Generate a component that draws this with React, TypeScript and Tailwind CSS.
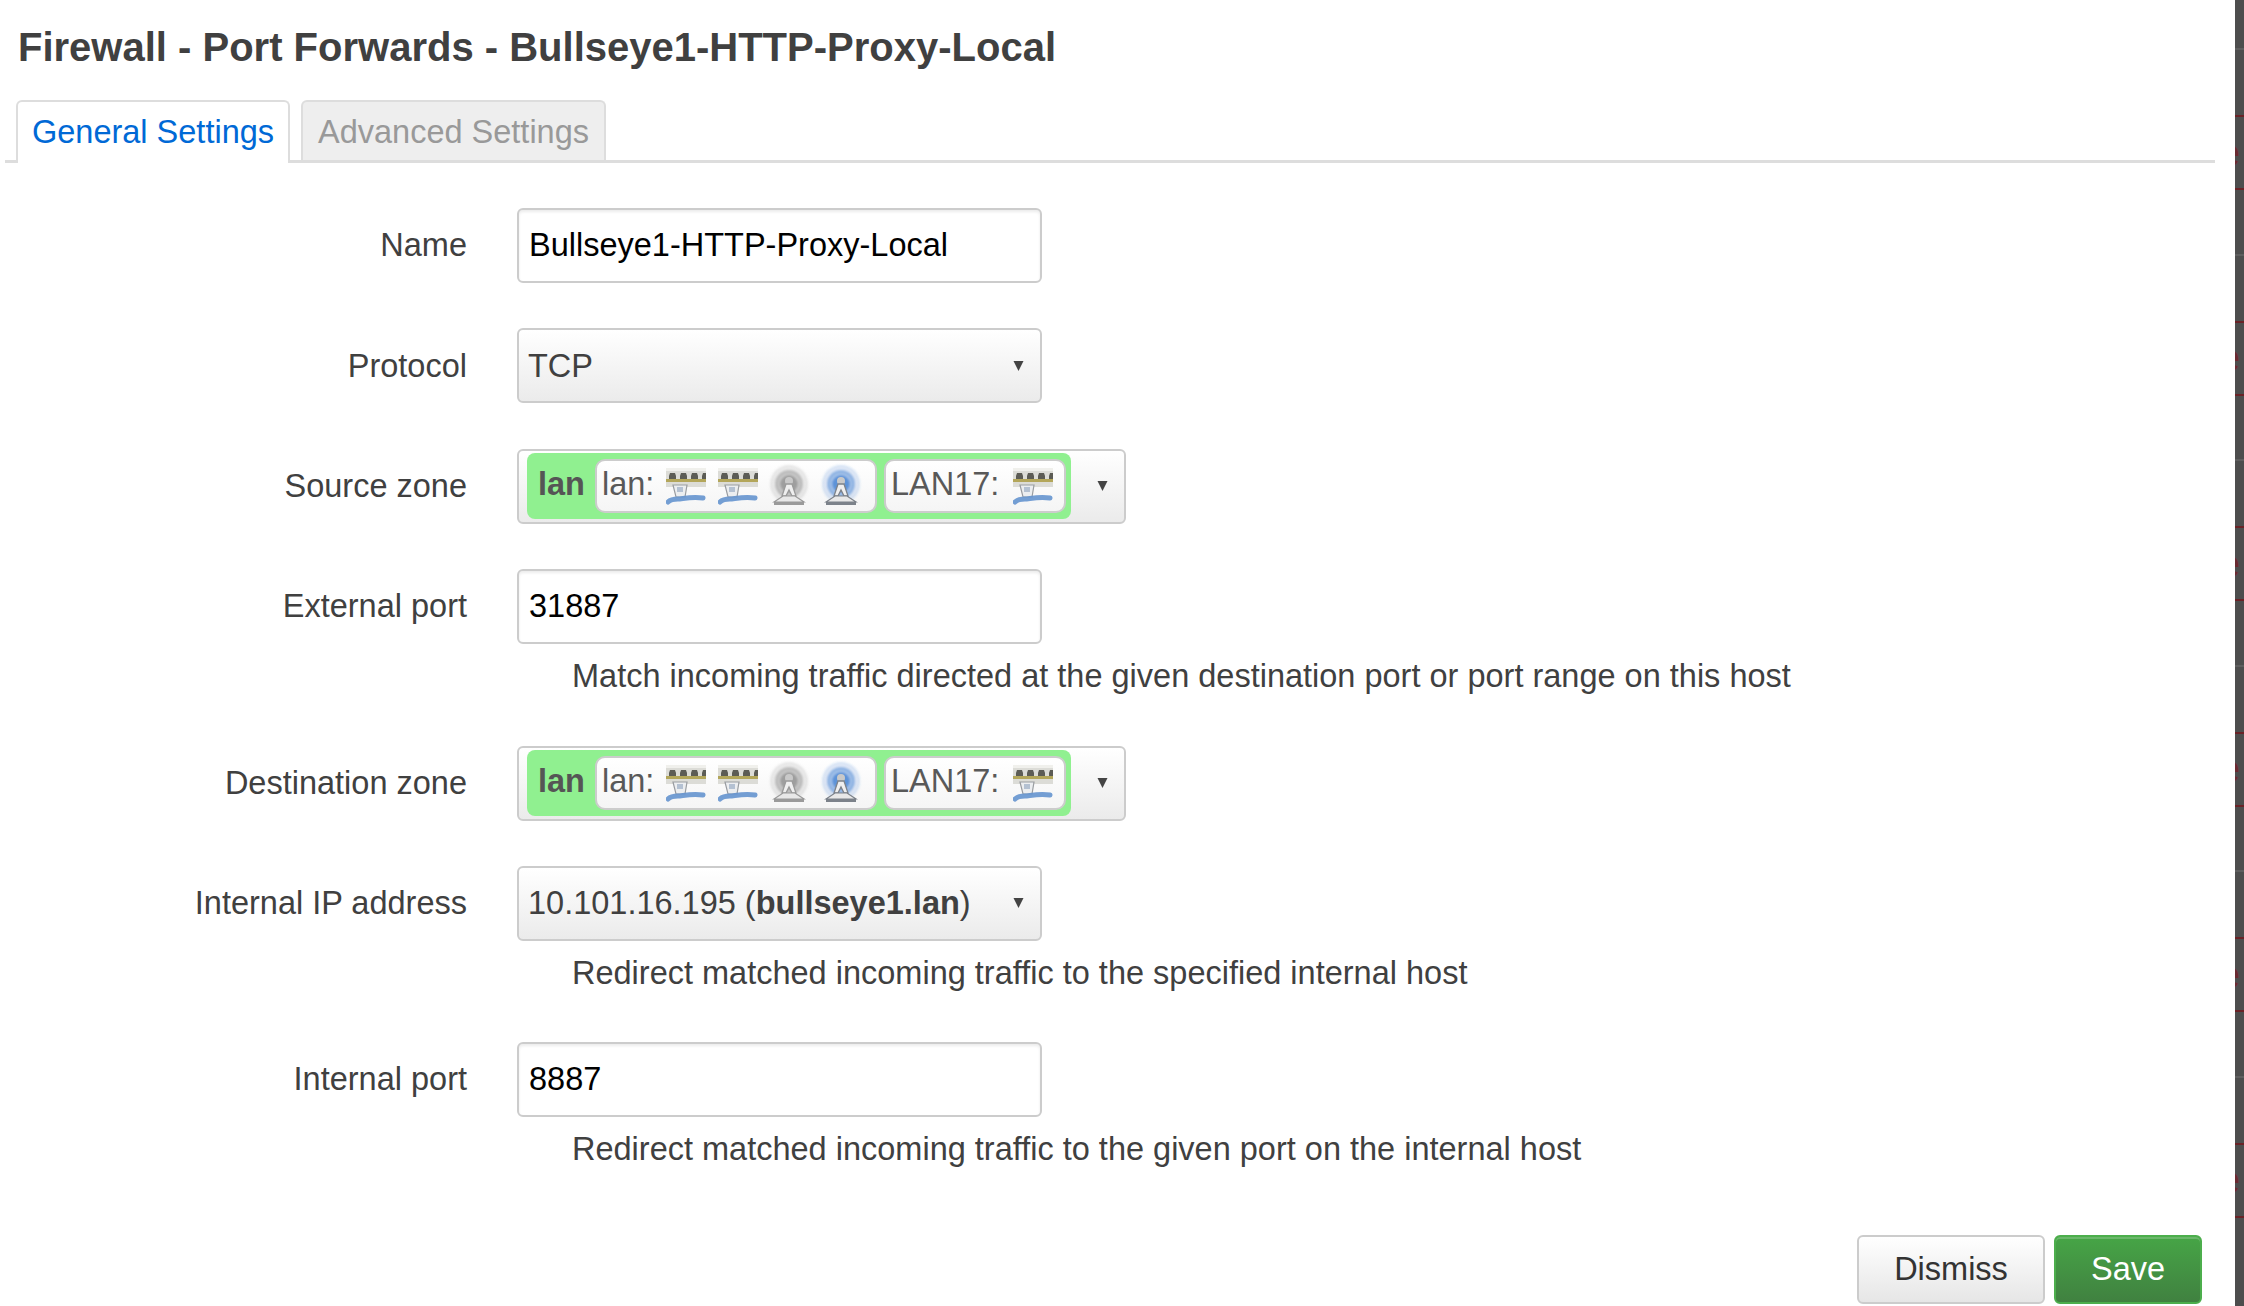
const font = "font-['Liberation_Sans',Arial,sans-serif]";

function NetIcon() {
  return (
    <svg width="40" height="37" viewBox="0 0 40 37" className="shrink-0">
      <g filter="url(#soft)">
        <rect x="0" y="0" width="40" height="19" fill="#dcdcd7" />
        <rect x="0" y="0" width="40" height="3" fill="#f0f0ec" />
        <rect x="0" y="11" width="40" height="3" fill="#b3a65a" />
        <g fill="#5c5c55">
          <path d="M3 8l1-3h5l1 3v3H3z" />
          <path d="M14 8l1-3h5l1 3v3h-7z" />
          <path d="M25 8l1-3h5l1 3v3h-7z" />
          <path d="M36 8l1-3h3v6h-4z" />
        </g>
        <path d="M7 17h14l-2 12H10z" fill="#eceef0" stroke="#9a9da1" strokeWidth="1.2" />
        <path d="M11 19h6v5h-6z" fill="#b4c1d2" />
        <path d="M2 34c3-3 6-3 10-3s14-3 25-1" fill="none" stroke="#6593cf" strokeWidth="5" strokeLinecap="round" opacity="0.9" />
      </g>
    </svg>
  );
}

function WifiIcon({ active }: { active?: boolean }) {
  const c = active ? "#3a7bd0" : "#8a8a8a";
  const t = active ? "#7c828a" : "#9a9a9a";
  return (
    <svg width="40" height="37" viewBox="0 0 40 37" className="shrink-0 overflow-visible">
      <g filter="url(#softer)">
        <circle cx="20" cy="16" r="19" fill={c} opacity="0.2" />
        <circle cx="20" cy="16" r="15.5" fill="#ffffff" opacity="0.3" />
        <circle cx="20" cy="16" r="14" fill={c} opacity="0.5" />
        <circle cx="20" cy="16" r="10.5" fill="#ffffff" opacity="0.3" />
        <circle cx="20" cy="16" r="9" fill={c} opacity="0.7" />
      </g>
      <g filter="url(#soft)">
        <circle cx="20" cy="13" r="4" fill="#c9c9c9" />
        <path d="M17 16h6l4 12h-4l-3-6-3 6h-4z" fill="#efefef" stroke={t} strokeWidth="1.3" />
        <path d="M5 34l9-6h12l9 6z" fill="#e8e8e8" stroke={t} strokeWidth="1.2" />
        <rect x="5" y="34" width="30" height="3" fill={t} />
      </g>
    </svg>
  );
}

function Caret() {
  return (
    <svg width="11" height="12" viewBox="0 0 11 12" className="shrink-0">
      <path d="M0.5 1h10L5.5 11z" fill="#444444" />
    </svg>
  );
}

function Field({ label, children, help }: { label: string; children: React.ReactNode; help?: string }) {
  return (
    <div className="mb-[45.4px]">
      <div className="flex items-center h-[75px]">
        <div className="w-[467px] shrink-0 text-right text-[#404040]">{label}</div>
        <div className="ml-[50px]">{children}</div>
      </div>
      {help && (
        <div className="h-[56px] pt-[8px] pl-[572px] leading-[48px] text-[#404040] whitespace-nowrap">{help}</div>
      )}
    </div>
  );
}

function TextBox({ value }: { value: string }) {
  return (
    <input
      readOnly
      value={value}
      className="block w-[525px] h-[75px] px-[10px] border-2 border-[#cccccc] rounded-[6px] bg-white text-black shadow-[inset_0_2px_3px_rgba(0,0,0,0.08)] outline-none"
    />
  );
}

function SelectBox({ children }: { children: React.ReactNode }) {
  return (
    <div className="flex items-center justify-between w-[525px] h-[75px] pl-[9px] pr-[16px] border-2 border-[#cccccc] rounded-[6px] bg-gradient-to-b from-white to-[#ebebeb] text-[#404040]">
      <span className="whitespace-nowrap">{children}</span>
      <Caret />
    </div>
  );
}

function Zone() {
  return (
    <div className="flex items-center w-[609px] h-[75px] pl-[8px] border-2 border-[#cccccc] rounded-[6px] bg-gradient-to-b from-white to-[#ebebeb]">
      <div className="flex items-center h-[66px] w-[544px] rounded-[8px] bg-[#90f090] pl-[11px] text-[#404040]">
        <span className="w-[57px] shrink-0 pb-[3px] font-bold text-[#555555]">lan</span>
        <div className="flex items-center h-[54px] w-[282px] pl-[5px] mr-[7px] border-2 border-[#cccccc] rounded-[10px] bg-gradient-to-b from-white to-[#f5f5f5] text-[#595959]">
          <span className="w-[64px] shrink-0 pb-[3px]">lan:</span>
          <div className="flex items-center gap-[11.5px]">
            <NetIcon />
            <NetIcon />
            <WifiIcon />
            <WifiIcon active />
          </div>
        </div>
        <div className="flex items-center h-[54px] w-[182px] pl-[5px] border-2 border-[#cccccc] rounded-[10px] bg-gradient-to-b from-white to-[#f5f5f5] text-[#595959]">
          <span className="w-[122px] shrink-0 pb-[3px] whitespace-nowrap">LAN17:</span>
          <NetIcon />
        </div>
      </div>
      <div className="ml-[26px]">
        <Caret />
      </div>
    </div>
  );
}

function StripUnit() {
  return (
    <div className="h-[205.5px] shrink-0 overflow-hidden">
      <div className="mt-[48px] h-[2px] bg-[#5e5e5e]" />
      <div className="mt-[65px] h-[2px] bg-[#6a2226]" />
      <div className="h-[71px] flex items-center overflow-hidden">
        <span className="-ml-[16px] text-[38px] leading-none text-[#6a2a30]">e</span>
      </div>
      <div className="h-[2px] bg-[#6a2226]" />
    </div>
  );
}

export default function App() {
  return (
    <div className={`${font} flex h-[1306px] w-[2244px] overflow-hidden bg-white text-[32.5px]`}>
      <svg width="0" height="0" className="absolute">
        <defs>
          <filter id="soft" x="-10%" y="-10%" width="120%" height="120%">
            <feGaussianBlur stdDeviation="0.6" />
          </filter>
          <filter id="softer" x="-15%" y="-15%" width="130%" height="130%">
            <feGaussianBlur stdDeviation="1" />
          </filter>
        </defs>
      </svg>
      <main className="w-[2235px] shrink-0">
        <h1 className="pl-[18px] pt-[22px] h-[100px] leading-[50px] text-[40px] font-bold text-[#404040] whitespace-nowrap">
          Firewall - Port Forwards - Bullseye1-HTTP-Proxy-Local
        </h1>
        <div className="ml-[5px] w-[2210px] h-[63px] flex items-end border-b-[3px] border-[#dddddd]">
          <div className="ml-[11px] -mb-[3px] w-[274px] h-[63px] flex items-center justify-center border-2 border-b-0 border-[#dddddd] rounded-t-[6px] bg-white text-[#0069d6]">
            General Settings
          </div>
          <div className="ml-[11px] w-[305px] h-[60px] pt-[2px] flex items-center justify-center border-2 border-b-0 border-[#dddddd] rounded-t-[6px] bg-[#eeeeee] text-[#999999]">
            Advanced Settings
          </div>
        </div>
        <div className="pt-[45px]">
          <Field label="Name"><TextBox value="Bullseye1-HTTP-Proxy-Local" /></Field>
          <Field label="Protocol"><SelectBox>TCP</SelectBox></Field>
          <Field label="Source zone"><Zone /></Field>
          <Field label="External port" help="Match incoming traffic directed at the given destination port or port range on this host"><TextBox value="31887" /></Field>
          <Field label="Destination zone"><Zone /></Field>
          <Field label="Internal IP address" help="Redirect matched incoming traffic to the specified internal host">
            <SelectBox>10.101.16.195 (<b>bullseye1.lan</b>)</SelectBox>
          </Field>
          <Field label="Internal port" help="Redirect matched incoming traffic to the given port on the internal host"><TextBox value="8887" /></Field>
        </div>
        <div className="flex justify-end mt-[62px] pr-[33px] gap-[9px]">
          <button className="w-[188px] h-[69px] border-2 border-[#cccccc] rounded-[6px] bg-gradient-to-b from-white to-[#e6e6e6] text-[#333333]">Dismiss</button>
          <button className="w-[148px] h-[69px] border-2 border-[#4cae4c] rounded-[6px] bg-gradient-to-b from-[#46a546] to-[#408140] shadow-[inset_0_2px_0_rgba(255,255,255,0.2)] text-white">Save</button>
        </div>
      </main>
      <aside className="flex-1 flex flex-col overflow-hidden bg-[#4d4d4d]">
        <StripUnit />
        <StripUnit />
        <StripUnit />
        <StripUnit />
        <StripUnit />
        <StripUnit />
      </aside>
    </div>
  );
}
